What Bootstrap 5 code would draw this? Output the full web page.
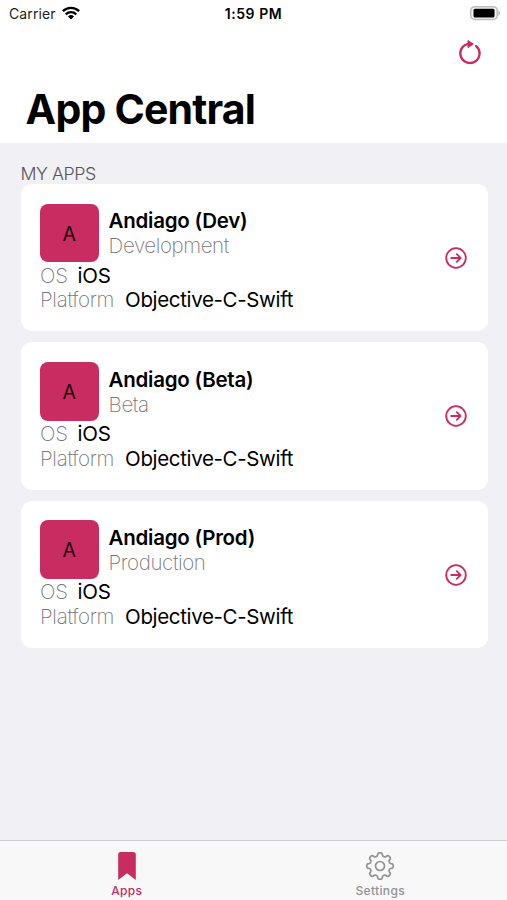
<!DOCTYPE html>
<html lang="en">
<head>
<meta charset="utf-8">
<meta name="viewport" content="width=device-width, initial-scale=1">
<title>App Central</title>
<link rel="stylesheet" href="https://cdn.jsdelivr.net/npm/bootstrap@5.3.0/dist/css/bootstrap.min.css">
<style>
:root { --accent: #c92c60; }
body { font-family: Inter, "Liberation Sans", sans-serif; color: #000; background: #f0f0f5; height: 900px; overflow: hidden; }
.app-header { height: 143px; background: #fff; }
.status-bar { height: 28px; font-size: 14px; line-height: 28px; }
.status-bar .carrier { letter-spacing: .1px; padding-left: 9px; color: #222; }
.status-bar .clock { font-weight: 600; letter-spacing: .55px; }
.wifi { margin-left: 6px; margin-top: -2px; }
.battery { margin-right: 6px; margin-top: -2px; }
.tool-row { height: 50px; padding-right: 25px; }
.page-title { font-size: 41px; font-weight: 700; line-height: 50px; padding-left: 25.6px; margin-top: 6px; letter-spacing: -.8px; }
.app-list { padding: 19px 19px 0 20.5px; }
.section-label { font-size: 17.8px; font-weight: 300; line-height: 23px; margin-bottom: -1px; color: #55555a; letter-spacing: -.45px; }
.app-card { border: 0; border-radius: 11px; height: 147.4px; padding: 19.7px 21px 0 19.5px; margin-bottom: 11px; font-size: 20.5px; line-height: 24.8px; color: #000; }
.app-tile { width: 58.6px; height: 58.6px; border-radius: 8px; background: var(--accent); font-size: 19.5px; color: #1d0610; padding-top: 2px; }
.app-info { margin-left: 10px; padding-top: 2.4px; }
.app-name { font-weight: 600; letter-spacing: -.24px; }
.soft { font-weight: 200; color: #77777b; }
.env { letter-spacing: -.4px; }
.app-facts { padding-top: 1.4px; }
.os, .plat { margin-right: 10px; letter-spacing: -.3px; }
.plat { margin-right: 11px; }
.val-os { letter-spacing: -.3px; }
.val-pl { letter-spacing: -.35px; }
.go { align-self: flex-start; margin-top: 43.3px; margin-right: .4px; }
.tab-bar { height: 60px; background: #f8f8f8; border-top: 1px solid #cfcfd2; font-size: 12px; font-weight: 500; line-height: 15px; color: #929294; }
.tab-bar a { color: inherit; letter-spacing: .35px; }
.tab-bar a.current { color: var(--accent); }
.tab-bar svg { margin-top: 10px; margin-bottom: 2px; }
</style>
</head>
<body class="d-flex flex-column">
<header class="app-header">
  <div class="status-bar row g-0">
    <div class="col d-flex align-items-center">
      <span class="carrier">Carrier</span>
      <svg class="wifi" width="18" height="14" viewBox="0 0 18 14"><g fill="none" stroke="#000" stroke-width="2.4"><path d="M.9 5.2a11.5 11.5 0 0 1 16.2 0"/><path d="M3.8 8.3a7.4 7.4 0 0 1 10.4 0"/></g><path d="M9 13.6 6 10.5a4.3 4.3 0 0 1 6 0z"/></svg>
    </div>
    <div class="col-auto clock">1:59 PM</div>
    <div class="col d-flex align-items-center justify-content-end">
      <svg class="battery" width="31" height="15" viewBox="0 0 31 15"><rect x=".7" y=".7" width="26.6" height="12.8" rx="4" fill="#f5f5f5" stroke="#bdbdbd" stroke-width="1.5"/><rect x="3.5" y="2.8" width="21" height="8.6" rx="1.5"/><path d="M28.5 4.5q3 2.6 0 5.2z" fill="#aaa"/></svg>
    </div>
  </div>
  <div class="tool-row d-flex align-items-center justify-content-end">
    <svg width="24" height="26" viewBox="0 0 24 26"><path d="M10.5 3.9A9.6 9.6 0 1 0 18.2 6.1" fill="none" stroke="#c92c60" stroke-width="2.4" stroke-linecap="round"/><path d="M10 .6 15.3 4.1 10 7.6z" fill="#c92c60" stroke="#c92c60" stroke-linejoin="round"/></svg>
  </div>
  <h1 class="page-title mb-0">App Central</h1>
</header>
<main class="app-list flex-grow-1">
  <div class="section-label">MY APPS</div>

  <article class="card app-card flex-row justify-content-between">
    <div>
      <div class="d-flex align-items-center">
        <div class="app-tile d-flex align-items-center justify-content-center">A</div>
        <div class="app-info"><div class="app-name">Andiago (Dev)</div><div class="soft env">Development</div></div>
      </div>
      <div class="app-facts">
        <div><span class="soft os">OS</span><span class="val-os">iOS</span></div>
        <div><span class="soft plat">Platform</span><span class="val-pl">Objective-C-Swift</span></div>
      </div>
    </div>
    <svg class="go" width="22" height="22" viewBox="0 0 22 22"><use href="#arrow"/></svg>
  </article>

  <article class="card app-card flex-row justify-content-between">
    <div>
      <div class="d-flex align-items-center">
        <div class="app-tile d-flex align-items-center justify-content-center">A</div>
        <div class="app-info"><div class="app-name">Andiago (Beta)</div><div class="soft env">Beta</div></div>
      </div>
      <div class="app-facts">
        <div><span class="soft os">OS</span><span class="val-os">iOS</span></div>
        <div><span class="soft plat">Platform</span><span class="val-pl">Objective-C-Swift</span></div>
      </div>
    </div>
    <svg class="go" width="22" height="22" viewBox="0 0 22 22"><use href="#arrow"/></svg>
  </article>

  <article class="card app-card flex-row justify-content-between">
    <div>
      <div class="d-flex align-items-center">
        <div class="app-tile d-flex align-items-center justify-content-center">A</div>
        <div class="app-info"><div class="app-name">Andiago (Prod)</div><div class="soft env">Production</div></div>
      </div>
      <div class="app-facts">
        <div><span class="soft os">OS</span><span class="val-os">iOS</span></div>
        <div><span class="soft plat">Platform</span><span class="val-pl">Objective-C-Swift</span></div>
      </div>
    </div>
    <svg class="go" width="22" height="22" viewBox="0 0 22 22"><use href="#arrow"/></svg>
  </article>
</main>
<nav class="tab-bar row g-0 text-center">
  <a class="col d-flex flex-column align-items-center text-decoration-none current" href="#">
    <svg width="30" height="30" viewBox="0 0 30 30"><path d="M6.2 3.5Q6.2 1 8.7 1h12.6q2.5 0 2.5 2.5V29L15 22.3 6.2 29z" fill="#c92c60"/></svg>
    <span>Apps</span>
  </a>
  <a class="col d-flex flex-column align-items-center text-decoration-none" href="#">
    <svg width="30" height="30" viewBox="-15 -15 30 30"><g fill="none" stroke="#929294" stroke-width="1.7"><circle r="4.5"/><g id="t4"><g id="t2"><path id="t1" d="M-3.83-9.24Q-2.73-9.7-2.5-10.7L-2.2-12.2Q-2-13.2-1-13.2H1Q2-13.2 2.2-12.2L2.5-10.7Q2.73-9.7 3.83-9.24"/><use href="#t1" transform="rotate(45)"/></g><use href="#t2" transform="rotate(90)"/></g><use href="#t4" transform="rotate(180)"/></g></svg>
    <span>Settings</span>
  </a>
</nav>
<svg class="d-none"><defs><g id="arrow" fill="none" stroke="#c92c60" stroke-width="1.8"><circle cx="11" cy="11" r="9.8"/><path d="M6.2 11h9.2M11.8 7.2 15.6 11l-3.8 3.8" stroke-linecap="round" stroke-linejoin="round"/></g></defs></svg>
<script src="https://cdn.jsdelivr.net/npm/bootstrap@5.3.0/dist/js/bootstrap.bundle.min.js"></script>
</body>
</html>
